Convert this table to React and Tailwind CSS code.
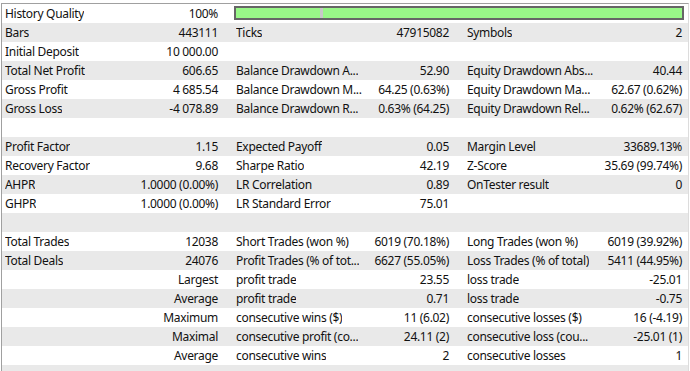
const rows = [
  { bar: true, a: ["History Quality", "100%"] },
  { a: ["Bars", "443111"], b: ["Ticks", "47915082"], c: ["Symbols", "2"] },
  { a: ["Initial Deposit", "10 000.00"] },
  { a: ["Total Net Profit", "606.65"], b: ["Balance Drawdown A...", "52.90"], c: ["Equity Drawdown Abs...", "40.44"] },
  { a: ["Gross Profit", "4 685.54"], b: ["Balance Drawdown M...", "64.25 (0.63%)"], c: ["Equity Drawdown Ma...", "62.67 (0.62%)"] },
  { a: ["Gross Loss", "-4 078.89"], b: ["Balance Drawdown R...", "0.63% (64.25)"], c: ["Equity Drawdown Rel...", "0.62% (62.67)"] },
  {},
  { a: ["Profit Factor", "1.15"], b: ["Expected Payoff", "0.05"], c: ["Margin Level", "33689.13%"] },
  { a: ["Recovery Factor", "9.68"], b: ["Sharpe Ratio", "42.19"], c: ["Z-Score", "35.69 (99.74%)"] },
  { a: ["AHPR", "1.0000 (0.00%)"], b: ["LR Correlation", "0.89"], c: ["OnTester result", "0"] },
  { a: ["GHPR", "1.0000 (0.00%)"], b: ["LR Standard Error", "75.01"] },
  {},
  { a: ["Total Trades", "12038"], b: ["Short Trades (won %)", "6019 (70.18%)"], c: ["Long Trades (won %)", "6019 (39.92%)"] },
  { a: ["Total Deals", "24076"], b: ["Profit Trades (% of tot...", "6627 (55.05%)"], c: ["Loss Trades (% of total)", "5411 (44.95%)"] },
  { a: ["", "Largest"], b: ["profit trade", "23.55"], c: ["loss trade", "-25.01"] },
  { a: ["", "Average"], b: ["profit trade", "0.71"], c: ["loss trade", "-0.75"] },
  { a: ["", "Maximum"], b: ["consecutive wins ($)", "11 (6.02)"], c: ["consecutive losses ($)", "16 (-4.19)"] },
  { a: ["", "Maximal"], b: ["consecutive profit (co...", "24.11 (2)"], c: ["consecutive loss (cou...", "-25.01 (1)"] },
  { a: ["", "Average"], b: ["consecutive wins", "2"], c: ["consecutive losses", "1"] },
  {},
];

const Cell = ({ pair, className }) => (
  <div className={`flex items-center justify-between gap-2 ${className}`}>
    <span className="min-w-0 overflow-hidden whitespace-nowrap">{pair ? pair[0] : ""}</span>
    <span className="shrink-0 whitespace-nowrap">{pair ? pair[1] : ""}</span>
  </div>
);

const QualityBar = () => (
  <div className="ml-[7px] mt-[2px] h-[14px] w-[450px] border-2 border-[#666666] bg-[#99f888] relative">
    <div className="absolute top-0 bottom-0 left-[84px] w-[3px] bg-[#c8c8c8]" />
  </div>
);

export default function App() {
  return (
    <div className="h-[371px] w-[690px] overflow-hidden bg-white pt-[3px] text-[12px] tracking-[-0.3px] text-[#111]" style={{ fontFamily: '"Noto Sans", sans-serif' }}>
      <div className="ml-px w-[688px] border-x border-t border-[#a0a0a0] border-r-[#dcdcdc]">
        {rows.map((r, i) => (
          <div key={i} className={`flex h-[19px] leading-[19px] ${i % 2 ? "bg-[#e9e9e9]" : "bg-white"}`}>
            <Cell pair={r.a} className="w-[225px] pl-[3px] pr-[9px]" />
            {r.bar ? (
              <QualityBar />
            ) : (
              <>
                <Cell pair={r.b} className="w-[231px] pl-[9px] pr-[9px]" />
                <Cell pair={r.c} className="w-[230px] pl-[9px] pr-[6px]" />
              </>
            )}
          </div>
        ))}
      </div>
    </div>
  );
}
